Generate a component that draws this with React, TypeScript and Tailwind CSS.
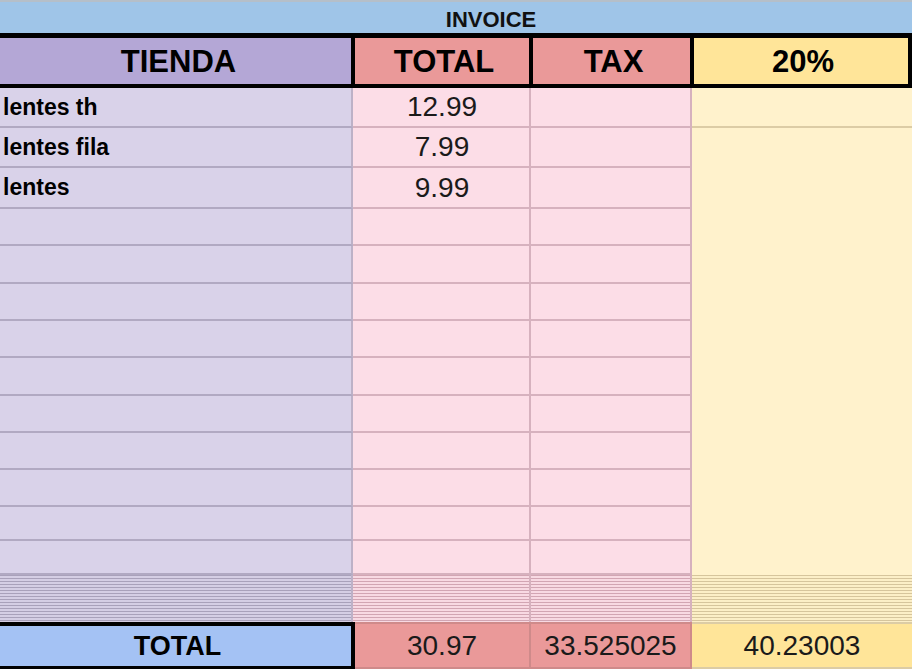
const rows = [
  { tienda: "lentes th", total: "12.99", h: "h-[40px]" },
  { tienda: "lentes fila", total: "7.99", h: "h-[40px]" },
  { tienda: "lentes", total: "9.99", h: "h-[41px]" },
  { tienda: "", total: "", h: "h-[37px]" },
  { tienda: "", total: "", h: "h-[38px]" },
  { tienda: "", total: "", h: "h-[37px]" },
  { tienda: "", total: "", h: "h-[37px]" },
  { tienda: "", total: "", h: "h-[38px]" },
  { tienda: "", total: "", h: "h-[37px]" },
  { tienda: "", total: "", h: "h-[37px]" },
  { tienda: "", total: "", h: "h-[37px]" },
  { tienda: "", total: "", h: "h-[34px]" },
  { tienda: "", total: "", h: "h-[34px]" },
];

export default function App() {
  return (
    <div className="w-[912px] h-[669px] overflow-hidden bg-white text-black font-['Liberation_Sans',Arial,sans-serif]">
      {/* title band */}
      <div className="h-[33px] border-t-2 border-[#b5bfc9] bg-[#9fc5e8] flex items-center justify-center pl-[70px] pt-[3px] text-[22px] font-bold text-[#111]">
        INVOICE
      </div>

      {/* header row */}
      <div className="flex h-[55px] bg-black pt-[5px] pb-[4px] pr-[4px] gap-x-[4px]">
        <div className="w-[351px] bg-[#b4a7d6] flex items-center justify-center text-[31px] font-bold pl-[6px] pt-[2px]">TIENDA</div>
        <div className="w-[174px] bg-[#ea9999] flex items-center justify-center text-[31px] font-bold pl-[4px] pt-[2px]">TOTAL</div>
        <div className="w-[157px] bg-[#ea9999] flex items-center justify-center text-[31px] font-bold pl-[4px] pt-[2px]">TAX</div>
        <div className="w-[214px] bg-[#ffe599] flex items-center justify-center text-[31px] font-bold pl-[4px] pt-[2px]">20%</div>
      </div>

      {/* body */}
      <div className="flex h-[487px]">
        <div className="w-[353px] flex flex-col">
          {rows.map((r, i) => (
            <div key={i} className={`${r.h} bg-[#d9d2e9] border-b-2 border-r-2 border-b-[#b1a9c2] border-r-[#bdb1c7] flex items-center pl-[3px] text-[23px] font-bold`}>
              {r.tienda}
            </div>
          ))}
        </div>
        <div className="w-[178px] flex flex-col">
          {rows.map((r, i) => (
            <div key={i} className={`${r.h} bg-[#fcdde7] border-b-2 border-r-2 border-[#d6b1be] flex items-center justify-center pl-[2px] text-[28px] text-[#1a1a1a]`}>
              {r.total}
            </div>
          ))}
        </div>
        <div className="w-[161px] flex flex-col">
          {rows.map((r, i) => (
            <div key={i} className={`${r.h} bg-[#fcdde7] border-b-2 border-r-2 border-[#d6b1be]`} />
          ))}
        </div>
        <div className="flex-1 flex flex-col">
          <div className="h-[40px] bg-[#fff2cc] border-b-2 border-[#dccca5]" />
          <div className="flex-1 bg-[#fff2cc]" />
        </div>
      </div>

      {/* hidden rows */}
      <div className="flex h-[47px]">
        <div className="w-[353px] border-r-2 border-[#bdb1c7] bg-[image:repeating-linear-gradient(to_bottom,#a9a1ba_0px,#a9a1ba_1px,#d5cee4_1px,#d5cee4_3px)]" />
        <div className="w-[178px] border-r-2 border-[#d6b1be] bg-[image:repeating-linear-gradient(to_bottom,#d2a5b3_0px,#d2a5b3_1px,#f8d9e3_1px,#f8d9e3_3px)]" />
        <div className="w-[161px] border-r-2 border-[#d6b1be] bg-[image:repeating-linear-gradient(to_bottom,#d2a5b3_0px,#d2a5b3_1px,#f8d9e3_1px,#f8d9e3_3px)]" />
        <div className="flex-1 bg-[image:repeating-linear-gradient(to_bottom,#d6c59c_0px,#d6c59c_1px,#fcefc7_1px,#fcefc7_3px)]" />
      </div>

      {/* totals */}
      <div className="flex h-[47px]">
        <div className="w-[355px] bg-[#a4c2f4] border-t-4 border-r-4 border-b-[3px] border-black flex items-center justify-center text-[27px] font-bold pl-[4px] pt-[1px]">
          TOTAL
        </div>
        <div className="w-[176px] bg-[#ea9999] border-t-2 border-r-2 border-b-2 border-[#cf8a8a] flex items-center justify-center text-[28px] text-[#1a1a1a] pt-[1px]">
          30.97
        </div>
        <div className="w-[161px] bg-[#ea9999] border-t-2 border-r-2 border-b-2 border-[#cf8a8a] flex items-center justify-center text-[28px] text-[#1a1a1a] pt-[1px]">
          33.525025
        </div>
        <div className="flex-1 bg-[#ffe599] border-t-2 border-b-2 border-[#dccca5] flex items-center justify-center text-[28px] text-[#1a1a1a] pt-[1px]">
          40.23003
        </div>
      </div>
    </div>
  );
}
